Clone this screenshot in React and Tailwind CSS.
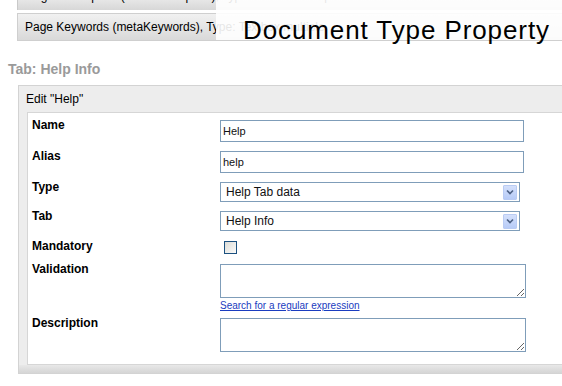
import React from 'react';

const labelCls = 'w-[188px] shrink-0 -mt-[2px] text-[12px] leading-[14px] font-bold text-black';

function FakeSelect({ value }) {
  return (
    <div className="flex h-[20px] w-[300px] items-center justify-between border border-[#7f9db9] bg-white pl-[5px] pr-[2px]">
      <span className="text-[12px] leading-[14px] text-[#111]">{value}</span>
      <span className="flex h-[15px] w-[14px] items-center justify-center rounded-[1px] border border-[#b9cbf3] bg-gradient-to-b from-[#d4e0fb] to-[#b7cbf7]">
        <svg width="8" height="6" viewBox="0 0 8 6">
          <path d="M1 1.5 L4 4.5 L7 1.5" fill="none" stroke="#4d6185" strokeWidth="1.6" />
        </svg>
      </span>
    </div>
  );
}

export default function App() {
  return (
    <div className="relative min-h-[386px] overflow-hidden bg-white font-['Liberation_Sans',Arial,sans-serif]">
      {/* property bars */}
      <div className="ml-[17px] h-[10px] overflow-hidden border-l border-[#c9c9c9] bg-gradient-to-b from-[#e6e6e6] to-[#d7d7d7]">
        <div className="-mt-[11px] pl-[8px] text-[12px] leading-[14px] text-black">
          Page Description (metaDescription), Type: Textbox multiple
        </div>
      </div>
      <div className="ml-[17px] mt-[3px] flex h-[28px] items-center border border-r-0 border-[#cfcfcf] bg-gradient-to-b from-[#f1f1f1] to-[#d9d9d9] pl-[7px] text-[12px] text-black">
        Page Keywords (metaKeywords), Type: Textbox multiple
      </div>

      {/* caption overlay */}
      <div className="absolute left-[216px] right-0 top-0 h-[40px] bg-white/90">
        <div className="absolute left-[27px] top-[15px] text-[26px] leading-[30px] tracking-[0.9px] text-black">
          Document Type Property
        </div>
      </div>

      <div className="ml-[8px] mt-[20px] text-[14px] leading-[16px] font-bold text-[#9a9a9a]">Tab: Help Info</div>

      <div className="ml-[18px] mt-[8px] border border-r-0 border-[#d3d3d3] bg-[#ededed]">
        <div className="px-[7px] pt-[6px] pb-[6px] text-[12px] leading-[14px] text-black">Edit "Help"</div>
        <div className="ml-[8px] border border-r-0 border-[#d6d6d6] bg-white pl-[4px] pt-[7px] pb-[12px]">
          <div className="flex items-start">
            <div className={labelCls}>Name</div>
            <input
              defaultValue="Help"
              className="h-[22px] w-[304px] border border-[#7f9db9] px-[2px] text-[11px] text-[#111] outline-none"
            />
          </div>
          <div className="mt-[9px] flex items-start">
            <div className={labelCls}>Alias</div>
            <input
              defaultValue="help"
              className="h-[22px] w-[304px] border border-[#7f9db9] px-[2px] text-[11px] text-[#111] outline-none"
            />
          </div>
          <div className="mt-[9px] flex items-start">
            <div className={labelCls}>Type</div>
            <FakeSelect value="Help Tab data" />
          </div>
          <div className="mt-[9px] flex items-start">
            <div className={labelCls}>Tab</div>
            <FakeSelect value="Help Info" />
          </div>
          <div className="mt-[10px] flex items-start">
            <div className={labelCls}>Mandatory</div>
            <span className="ml-[4px] h-[13px] w-[13px] border border-[#1c5180] bg-gradient-to-br from-[#dcdcd7] to-[#fbfbfa]" />
          </div>
          <div className="mt-[10px] flex items-start">
            <div className={labelCls}>Validation</div>
            <div className="flex flex-col">
              <textarea className="h-[34px] w-[306px] resize border border-[#7f9db9] outline-none" />
              <a href="#" className="mt-[2px] text-[10px] leading-[12px] text-[#1a3cc0] underline">
                Search for a regular expression
              </a>
            </div>
          </div>
          <div className="mt-[6px] flex items-start">
            <div className={labelCls}>Description</div>
            <textarea className="h-[34px] w-[306px] resize border border-[#7f9db9] outline-none" />
          </div>
        </div>
        <div className="h-[8px] bg-gradient-to-b from-[#e8e8e8] to-[#d5d5d5]" />
      </div>
    </div>
  );
}
